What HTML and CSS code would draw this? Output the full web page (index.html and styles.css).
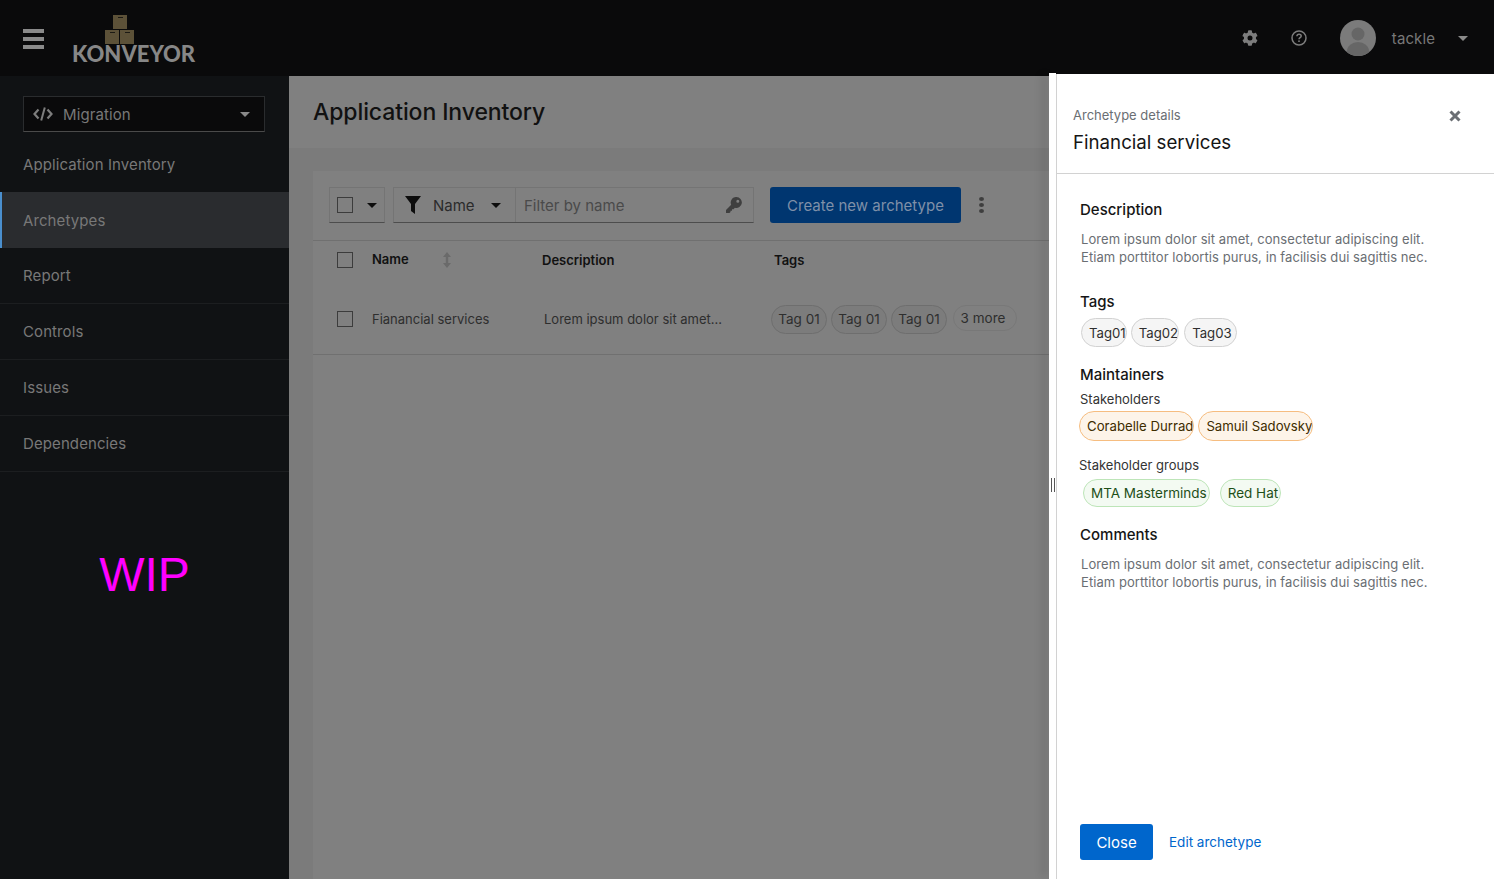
FILE: index.html
```html
<!DOCTYPE html>
<html lang="en">
<head>
<meta charset="utf-8">
<title>Application Inventory</title>
<link rel="stylesheet" href="styles.css">
</head>
<body>
<header class="masthead">
  <div class="burger"><span></span><span></span><span></span></div>
  <div class="logo">
    <svg class="logo-boxes" width="31" height="30" viewBox="0 0 31 30">
      <rect x="9" y="0" width="14" height="14" fill="#5c5138"/><rect x="14" y="2" width="5" height="1" fill="#1c1a14"/>
      <rect x="1" y="15" width="14" height="14" fill="#5c5138"/><rect x="6" y="17" width="5" height="1" fill="#1c1a14"/>
      <rect x="16" y="15" width="14" height="14" fill="#5c5138"/><rect x="21" y="17" width="5" height="1" fill="#1c1a14"/>
    </svg>
    <span class="logo-text">KONVEYOR</span>
  </div>
  <div class="mast-tools">
    <svg class="gear" width="16" height="16" viewBox="0 0 512 512"><path fill="#7d7d7d" d="M487 316l-42-25a190 190 0 0 0 0-70l42-25c5-3 7-9 5-14-11-35-30-67-55-93-4-4-10-5-15-2l-42 25a187 187 0 0 0-61-35V28c0-6-4-11-9-12-37-8-74-8-110 0-6 1-10 6-10 12v49a193 193 0 0 0-61 35L87 87c-5-3-11-2-15 2-25 26-44 58-55 93-2 5 0 11 5 14l42 25a190 190 0 0 0 0 70l-42 25c-5 3-7 9-5 14 11 35 30 67 55 93 4 4 10 5 15 2l42-25a187 187 0 0 0 61 35v49c0 6 4 11 9 12 37 8 74 8 110 0 6-1 10-6 10-12v-49a193 193 0 0 0 61-35l42 25c5 3 11 2 15-2 25-26 44-58 55-93 2-5 0-11-5-14zM256 336a80 80 0 1 1 0-160 80 80 0 0 1 0 160z"/></svg>
    <svg class="help" width="16" height="16" viewBox="0 0 16 16"><circle cx="8" cy="8" r="7" fill="none" stroke="#7d7d7d" stroke-width="1.5"/><path d="M5.900 6.200c.1-1.300 1-2 2.200-2 1.300 0 2.100.8 2.100 1.800 0 1.700-2.200 1.600-2.200 3.300" fill="none" stroke="#7d7d7d" stroke-width="1.500"/><rect x="7.200" y="10.400" width="1.600" height="1.600" fill="#7d7d7d"/></svg>
    <svg class="avatar" width="36" height="36" viewBox="0 0 36 36"><defs><clipPath id="av"><circle cx="18" cy="18" r="18"/></clipPath></defs><circle cx="18" cy="18" r="18" fill="#7b7b7b"/><g clip-path="url(#av)"><circle cx="18" cy="14" r="6.500" fill="#666"/><ellipse cx="18" cy="31" rx="11" ry="9" fill="#666"/></g></svg>
    <span class="user">tackle</span>
    <span class="caret caret-light"></span>
  </div>
</header>
<div class="shell">
  <nav class="sidebar">
    <div class="persona">
      <svg class="code-icon" width="20" height="14" viewBox="0 0 20 14"><path d="M5.500 2.500 1.500 7l4 4.500M14.500 2.500l4 4.500-4 4.500" fill="none" stroke="#7d7d7d" stroke-width="2.200"/><path d="M11.800.5 8.200 13.500" stroke="#7d7d7d" stroke-width="2"/></svg>
      <span class="persona-label">Migration</span>
      <span class="caret caret-light"></span>
    </div>
    <a class="nav-item nav-first">Application Inventory</a>
    <a class="nav-item nav-active">Archetypes</a>
    <a class="nav-item">Report</a>
    <a class="nav-item">Controls</a>
    <a class="nav-item">Issues</a>
    <a class="nav-item">Dependencies</a>
    <div class="wip">WIP</div>
  </nav>
  <main class="main">
    <div class="page-head"><h1>Application Inventory</h1></div>
    <section class="card">
      <div class="toolbar">
        <div class="split"><span class="box"></span><span class="caret caret-dark"></span></div>
        <div class="filter">
          <div class="filter-type">
            <svg width="16" height="18" viewBox="0 0 16 18"><path d="M0 0h16L10 8v10l-4-3V8z" fill="#0d0d0d"/></svg>
            <span>Name</span>
            <span class="caret caret-dark"></span>
          </div>
          <div class="filter-input">
            <span>Filter by name</span>
            <svg width="16" height="16" viewBox="0 0 16 16"><path d="M10.500 0a5.500 5.500 0 1 1-1.600 10.800L7.500 12.200H6v1.500H4.500V15l-1 1H0v-3l5.200-5.200A5.500 5.500 0 0 1 10.500 0zm1.300 2.800a1.500 1.500 0 1 0 0 3 1.500 1.500 0 0 0 0-3z" fill="#3f3f3f"/></svg>
          </div>
        </div>
        <button class="create">Create new archetype</button>
        <span class="kebab"><i></i><i></i><i></i></span>
      </div>
      <div class="row head">
        <span class="box"></span>
        <span class="col-name">Name</span>
        <svg class="sort" width="8" height="16" viewBox="0 0 8 16"><path d="M4 0l4 5H5.200v6H8l-4 5-4-5h2.800V5H0z" fill="#6a6a6a"/></svg>
        <span class="col-desc">Description</span>
        <span class="col-tags">Tags</span>
      </div>
      <div class="row body-row">
        <span class="box"></span>
        <span class="cell-name">Fianancial services</span>
        <span class="cell-desc">Lorem ipsum dolor sit amet...</span>
        <span class="cell-tags">
          <span class="dim-chip">Tag 01</span><span class="dim-chip">Tag 01</span><span class="dim-chip">Tag 01</span><span class="dim-chip more">3 more</span>
        </span>
      </div>
    </section>
  </main>
</div>
<aside class="drawer">
  <div class="grip"><i></i><i></i></div>
  <div class="drawer-inner">
    <div class="drawer-head">
      <div class="drawer-sub">Archetype details</div>
      <div class="drawer-title">Financial services</div>
      <svg class="close-x" width="12" height="12" viewBox="0 0 12 12"><path d="M1.500 1.500l9 9M10.500 1.500l-9 9" stroke="#6a6e73" stroke-width="3"/></svg>
    </div>
    <div class="drawer-body">
      <h3 class="h-desc">Description</h3>
      <p class="lorem">Lorem ipsum dolor sit amet, consectetur adipiscing elit.<br>Etiam porttitor lobortis purus, in facilisis dui sagittis nec.</p>
      <h3 class="h-tags">Tags</h3>
      <div class="chips chips-grey"><span class="chip grey">Tag01</span><span class="chip grey">Tag02</span><span class="chip grey">Tag03</span></div>
      <h3 class="h-maint">Maintainers</h3>
      <div class="sub sub-stake">Stakeholders</div>
      <div class="chips chips-orange"><span class="chip orange">Corabelle Durrad</span><span class="chip orange">Samuil Sadovsky</span></div>
      <div class="sub sub-groups">Stakeholder groups</div>
      <div class="chips chips-green"><span class="chip green">MTA Masterminds</span><span class="chip green">Red Hat</span></div>
      <h3 class="h-comments">Comments</h3>
      <p class="lorem">Lorem ipsum dolor sit amet, consectetur adipiscing elit.<br>Etiam porttitor lobortis purus, in facilisis dui sagittis nec.</p>
    </div>
    <div class="drawer-foot">
      <button class="close-btn">Close</button>
      <a class="edit-link">Edit archetype</a>
    </div>
  </div>
</aside>
</body>
</html>
```
FILE: styles.css
```css
* { box-sizing: border-box; }
html, body { height: 100%; }
body {
  margin: 0;
  height: 879px;
  overflow: hidden;
  display: flex;
  flex-direction: column;
  font-family: "Inter", "Open Sans", sans-serif;
  font-size: 14px;
  background: #7b7b7b;
  position: relative;
}
.masthead {
  height: 76px;
  flex: none;
  background: #0a0a0b;
  display: flex;
  align-items: center;
  padding: 0 26px 0 23px;
}
.burger { width: 21px; display: flex; flex-direction: column; gap: 4px; margin-top: 1px; }
.burger span { height: 4px; background: #8a8a8a; }
.logo { margin-left: 29px; margin-top: 1px; display: flex; flex-direction: column; align-items: flex-start; width: 122px; }
.logo-boxes { display: block; margin-left: 31px; }
.logo-text {
  font-family: "Lato", sans-serif;
  font-weight: 900;
  font-size: 22px;
  line-height: 18px;
  color: #878787;
  white-space: nowrap;
  margin-left: -1px;
}
.mast-tools { margin-left: auto; display: flex; align-items: center; }
.gear { margin-right: 33px; }
.help { margin-right: 33px; }
.avatar { margin-right: 16px; }
.user { color: #787878; font-size: 15px; letter-spacing: .1px; margin-right: 23px; }
.caret { display: inline-block; width: 0; height: 0; border-left: 5px solid transparent; border-right: 5px solid transparent; border-top: 5px solid; }
.caret-light { border-top-color: #8a8a8a; }
.caret-dark { border-top-color: #0d0d0d; }

.shell { flex: 1; display: flex; min-height: 0; }
.sidebar { width: 289px; flex: none; background: #101214; display: flex; flex-direction: column; }
.persona {
  margin: 20px 24px 4px 23px;
  height: 36px;
  background: #0a0a0b;
  border: 1px solid #2a2c2e;
  border-bottom-color: #4a4a4a;
  display: flex;
  align-items: center;
  padding: 0 14px 0 9px;
  color: #787878;
  font-size: 15px;
  letter-spacing: .1px;
}
.persona-label { margin-left: 10px; margin-right: auto; }
.nav-item {
  height: 56px;
  flex: none;
  display: flex;
  align-items: center;
  padding-left: 23px;
  color: #787878;
  font-size: 15px;
  letter-spacing: .1px;
  border-bottom: 1px solid #1c1e20;
}
.nav-first { height: 56px; border-bottom: 0; }
.nav-active { background: #2a2c2f; box-shadow: inset 2px 0 0 #4a8fce; border-bottom: 0; }
.wip {
  margin-top: 75px;
  text-align: center;
  font-family: "Liberation Sans", Arial, sans-serif;
  font-size: 48px;
  line-height: 56px;
  color: #f0f;
}
.main { flex: 1; min-width: 0; display: flex; flex-direction: column; }
.page-head { height: 72px; background: #808080; padding-left: 24px; display: flex; align-items: center; }
.page-head h1 { margin: 0; font-weight: 500; font-size: 23px; letter-spacing: -.1px; color: #111; }
.card { flex: 1; margin: 23px 0 0 24px; background: #808080; color: #333; }
.toolbar { height: 70px; display: flex; align-items: center; padding: 0 0 1px 16px; border-bottom: 1px solid #707070; }
.box { display: block; width: 16px; height: 16px; flex: none; border: 1px solid #3c3c3c; background: #808080; }
.split {
  height: 36px; width: 56px;
  display: flex; align-items: center; gap: 14px; padding-left: 7px;
  border: 1px solid #747474; border-bottom-color: #4d4d4d;
}
.filter { display: flex; height: 36px; margin-left: 8px; width: 361px; border: 1px solid #747474; border-bottom-color: #4d4d4d; }
.filter-type { width: 122px; flex: none; display: flex; align-items: center; padding-left: 11px; font-size: 15px; color: #2b2b2b; border-right: 1px solid #747474; }
.filter-type span:nth-child(2) { margin-left: 12px; margin-right: auto; }
.filter-type .caret { margin-right: 14px; }
.filter-input { flex: 1; display: flex; align-items: center; justify-content: space-between; padding: 0 11px 0 8px; font-size: 15px; color: #4a4a4a; }
.create {
  margin-left: 16px; height: 36px; width: 191px; padding: 0;
  background: #003670; border: 0; border-radius: 3px;
  color: #7f90a8; font: inherit; font-size: 15px;
}
.kebab { margin-left: 18px; display: flex; flex-direction: column; gap: 2px; }
.kebab i { width: 5px; height: 4px; border-radius: 50%; background: #3e3e3e; display: block; }
.row { display: flex; align-items: center; padding-left: 24px; position: relative; }
.head { height: 38px; font-weight: 600; font-size: 13px; color: #111; margin-bottom: 12px; }
.head .box { margin-top: -1px; }
.col-name { margin-left: 19px; width: 71px; margin-top: -3px; }
.sort { margin-top: -1px; }
.col-desc { margin-left: 91px; width: 232px; }
.body-row { height: 64px; padding-bottom: 7px; border-bottom: 1px solid #707070; font-size: 13px; color: #2e2e2e; }
.cell-name { margin-left: 19px; width: 172px; }
.cell-desc { width: 227px; white-space: nowrap; }
.cell-tags { display: flex; gap: 4px; }
.dim-chip { height: 29px; width: 56px; border: 1px solid #6e6e6e; border-radius: 15px; display: flex; align-items: center; justify-content: center; font-size: 13.500px; background: #7c7c7c; }
.dim-chip.more { width: 64px; margin-left: 2px; padding-right: 4px; background: #808080; border-color: #787878; height: 26px; }

.drawer { position: absolute; top: 73px; right: 0; bottom: 0; width: 445px; display: flex; }
.grip { width: 7px; flex: none; display: flex; align-items: center; justify-content: center; gap: 2px; padding: 17px 0 0 1px; background: #fff; box-shadow: -8px 0 8px -2px rgba(0,0,0,.22); }
.grip i { width: 1px; height: 14px; background: #555; }
.drawer-inner { flex: 1; min-width: 0; background: #fff; border-left: 1px solid #d2d2d2; display: flex; flex-direction: column; margin-top: 1px; color: #151515; }
.drawer-head { height: 100px; flex: none; padding: 31px 0 0 16px; border-bottom: 1px solid #d2d2d2; position: relative; }
.drawer-sub { font-size: 13px; line-height: 20px; color: #6a6e73; }
.drawer-title { font-size: 18.700px; line-height: 28px; margin-top: 4px; }
.close-x { position: absolute; left: 392px; top: 36px; }
.drawer-body { padding: 0 0 0 23px; flex: 1; }
h3 { margin: 0; font-weight: 500; font-size: 15px; line-height: 20px; }
.h-desc { margin-top: 26px; }
.lorem { margin: 10px 0 0 1px; font-size: 13px; letter-spacing: .07px; line-height: 18px; color: #6a6e73; white-space: nowrap; }
.h-tags { margin-top: 26px; }
.chips { display: flex; }
.chip { height: 29px; display: flex; align-items: center; border-radius: 15px; border: 1px solid; padding-left: 7px; font-size: 13.200px; white-space: nowrap; overflow: hidden; }
.chips-grey { margin: 6px 0 0 1px; gap: 4px; }
.grey { background: #f5f5f5; border-color: #d2d2d2; color: #2e2e2e; }
.grey:last-child { padding-right: 4px; margin-left: 1px; }
.h-maint { margin-top: 18px; }
.sub { font-size: 13px; line-height: 18px; color: #333; }
.sub-stake { margin-top: 5px; }
.chips-orange { margin: 3px 0 0 -1px; gap: 4px; }
.orange { background: #fdf4e9; border-color: #f6bd80; color: #3d2c00; height: 30px; }
.sub-groups { margin-top: 15px; margin-left: -1px; }
.chips-green { margin: 5px 0 0 3px; gap: 10px; }
.green { background: #f3faf2; border-color: #bde5b8; color: #1e4f18; height: 28px; font-size: 13.500px; padding-right: 2px; }
.h-comments { margin-top: 18px; }
.drawer-foot { height: 55px; flex: none; padding-left: 23px; display: flex; align-items: flex-start; }
.close-btn { width: 73px; height: 36px; background: #06c; color: #fff; border: 0; border-radius: 3px; font: inherit; font-size: 15px; padding: 0; }
.edit-link { margin-left: 16px; margin-top: 10px; color: #06c; font-size: 13.500px; }
```
